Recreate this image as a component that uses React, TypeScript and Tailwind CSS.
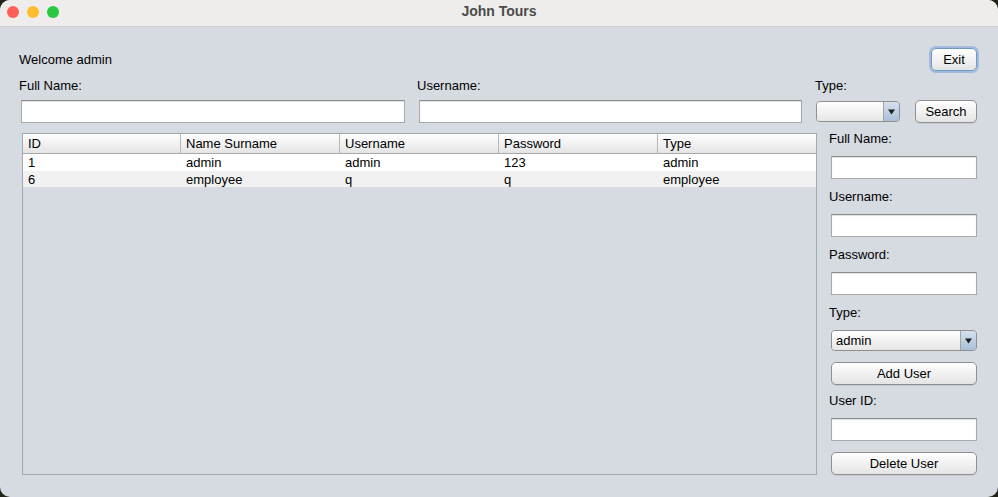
import type { ReactNode } from 'react'

const FONT = { fontFamily: '"Liberation Sans", Arial, sans-serif' }

const USERS = [
  { id: '1', name: 'admin', username: 'admin', password: '123', type: 'admin' },
  { id: '6', name: 'employee', username: 'q', password: 'q', type: 'employee' },
]

const COLUMNS = ['ID', 'Name Surname', 'Username', 'Password', 'Type']

function TextField({ className = '' }: { className?: string }) {
  return (
    <div
      className={`h-[23px] bg-white border border-[#a9a9a9] border-t-[#8c8c8c] shadow-[inset_0_1px_1px_rgba(0,0,0,0.12)] ${className}`}
    />
  )
}

function Button({ children, className = '', focused = false }: { children: ReactNode; className?: string; focused?: boolean }) {
  return (
    <button
      className={`h-[23px] rounded-[5px] border bg-gradient-to-b from-white to-[#e4e4e4] text-[13px] text-black leading-none ${
        focused ? 'border-[#6e97c6] shadow-[0_0_0_2px_rgba(120,160,215,0.55)]' : 'border-[#8f8f8f] shadow-[0_1px_0_rgba(0,0,0,0.08)]'
      } ${className}`}
    >
      {children}
    </button>
  )
}

function Combo({ value, className = '' }: { value?: string; className?: string }) {
  return (
    <div className={`h-[21px] flex rounded-[4px] border border-[#8f8f8f] overflow-hidden ${className}`}>
      <div className="flex-1 flex items-center pl-[4px] bg-gradient-to-b from-white to-[#e6e6e6] text-[13px] text-black">
        {value}
      </div>
      <div className="w-[16px] flex items-center justify-center border-l border-[#a3a3a3] bg-gradient-to-b from-[#d4e1ee] to-[#a9c0d8]">
        <svg width="7" height="6" viewBox="0 0 7 6">
          <path d="M0 0.5 L7 0.5 L3.5 5.5 Z" fill="#1e1e1e" />
        </svg>
      </div>
    </div>
  )
}

function Label({ children, className = '' }: { children: ReactNode; className?: string }) {
  return <div className={`h-[16px] leading-[16px] text-[13px] text-black ${className}`}>{children}</div>
}

export default function App() {
  return (
    <div className="w-[998px] h-[497px] bg-[#23231a]">
      <div className="w-full h-full bg-[#d6dae1] flex flex-col overflow-hidden rounded-[10px]" style={FONT}>
        {/* Title bar */}
        <div className="h-[27px] shrink-0 relative flex items-center justify-center bg-[#eeedec] border-b border-[#cdcdcd]">
          <div className="absolute left-[7px] top-[6px] flex gap-[8px]">
            <span className="w-[12px] h-[12px] rounded-full bg-[#fe5f57]" />
            <span className="w-[12px] h-[12px] rounded-full bg-[#febc2e]" />
            <span className="w-[12px] h-[12px] rounded-full bg-[#28c840]" />
          </div>
          <span className="text-[14px] font-bold text-[#4b4b4b] -mt-[3px]">John Tours</span>
        </div>

        <div className="flex-1 flex flex-col pl-[19px] pr-[21px] pt-[20px]">
          {/* Welcome row */}
          <div className="h-[25px] flex items-center justify-between">
            <span className="text-[13px] text-black">Welcome admin</span>
            <Button focused className="w-[46px]">Exit</Button>
          </div>

          {/* Search row */}
          <div className="mt-[6px] grid grid-cols-[398px_398px_1fr]">
            <div className="flex flex-col gap-[6px]">
              <Label>Full Name:</Label>
              <TextField className="ml-[2px] w-[384px]" />
            </div>
            <div className="flex flex-col gap-[6px]">
              <Label>Username:</Label>
              <TextField className="ml-[2px] w-[383px]" />
            </div>
            <div className="flex flex-col gap-[6px]">
              <Label>Type:</Label>
              <div className="flex items-center h-[23px]">
                <Combo className="ml-[1px] w-[84px]" />
                <Button className="ml-[15px] w-[62px]">Search</Button>
              </div>
            </div>
          </div>

          {/* Main */}
          <div className="mt-[8px] flex">
            <div className="ml-[3px] mt-[2px] w-[795px] h-[342px] border border-[#a2a6ad] flex flex-col">
              <div className="h-[20px] grid grid-cols-[158px_159px_159px_159px_1fr] bg-gradient-to-b from-white to-[#e4e4e4] border-b border-[#a8a8a8]">
                {COLUMNS.map((c, i) => (
                  <div
                    key={c}
                    className={`pl-[5px] flex items-center text-[13px] text-black ${i < COLUMNS.length - 1 ? 'border-r border-[#b7b7b7]' : ''}`}
                  >
                    {c}
                  </div>
                ))}
              </div>
              {USERS.map((u, r) => (
                <div
                  key={u.id}
                  className={`h-[16.5px] grid grid-cols-[158px_159px_159px_159px_1fr] text-[13px] text-black leading-[17px] ${
                    r % 2 === 0 ? 'bg-white' : 'bg-[#f1f1f1]'
                  }`}
                >
                  <div className="pl-[5px]">{u.id}</div>
                  <div className="pl-[5px]">{u.name}</div>
                  <div className="pl-[5px]">{u.username}</div>
                  <div className="pl-[5px]">{u.password}</div>
                  <div className="pl-[5px]">{u.type}</div>
                </div>
              ))}
            </div>

            {/* Right panel */}
            <div className="ml-[12px] w-[148px] flex flex-col">
              <Label>Full Name:</Label>
              <TextField className="mt-[9px] ml-[2px] w-[146px]" />
              <Label className="mt-[10px]">Username:</Label>
              <TextField className="mt-[9px] ml-[2px] w-[146px]" />
              <Label className="mt-[10px]">Password:</Label>
              <TextField className="mt-[9px] ml-[2px] w-[146px]" />
              <Label className="mt-[10px]">Type:</Label>
              <Combo value="admin" className="mt-[9px] ml-[2px] w-[146px]" />
              <Button className="mt-[11px] ml-[2px] w-[146px]">Add User</Button>
              <Label className="mt-[8px]">User ID:</Label>
              <TextField className="mt-[9px] ml-[2px] w-[146px]" />
              <Button className="mt-[11px] ml-[2px] w-[146px]">Delete User</Button>
            </div>
          </div>
        </div>
      </div>
    </div>
  )
}
